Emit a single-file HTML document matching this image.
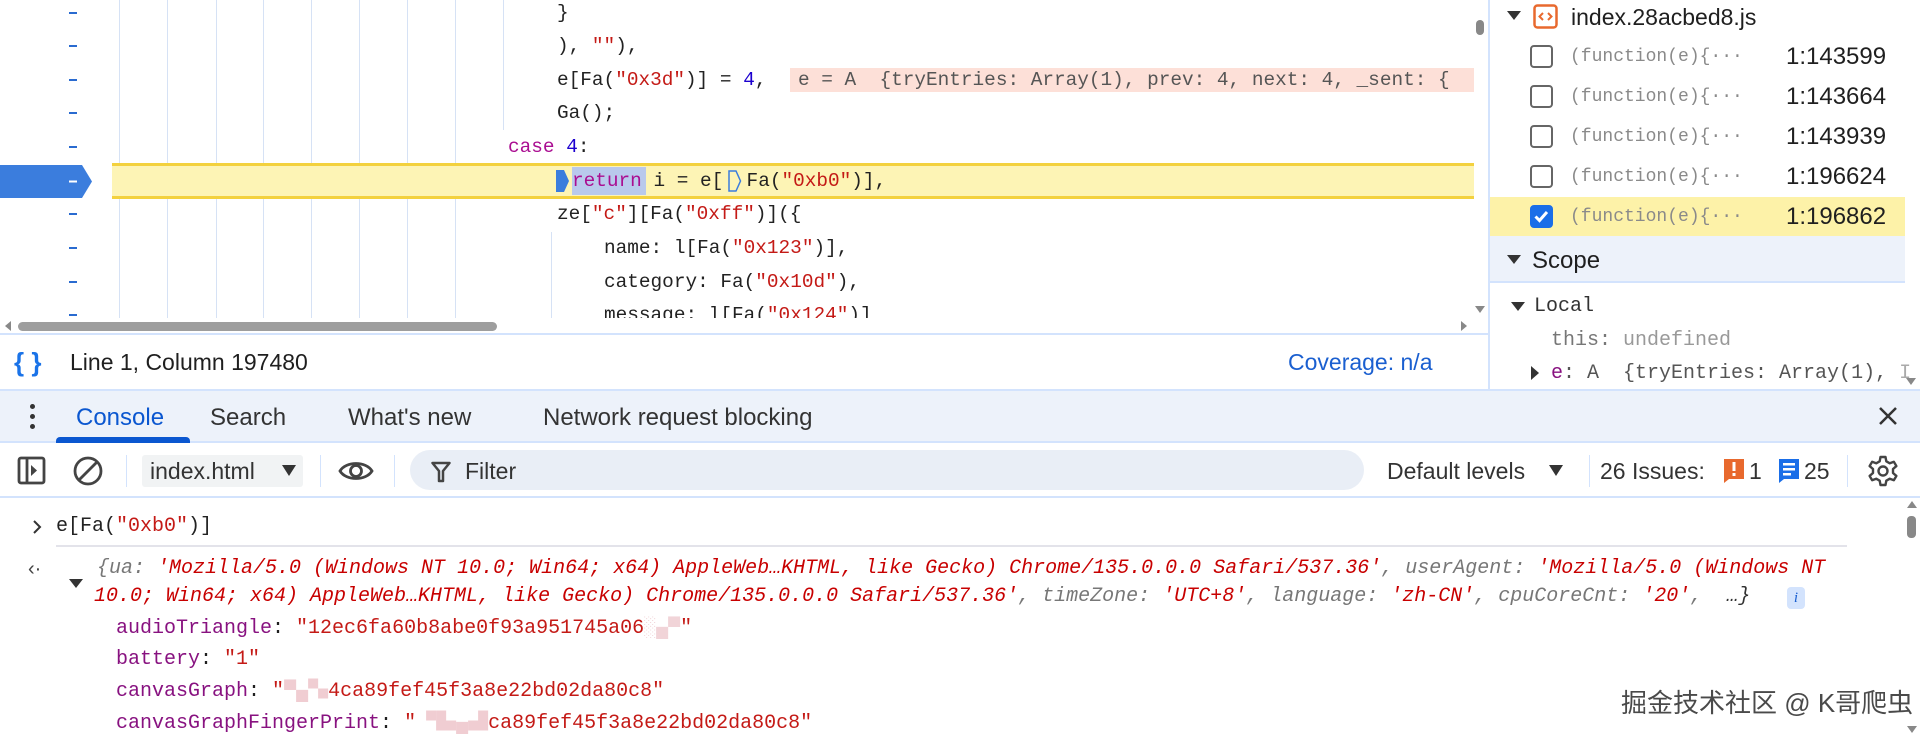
<!DOCTYPE html>
<html><head><meta charset="utf-8"><style>
*{margin:0;padding:0;box-sizing:border-box}
body{width:1920px;height:738px;overflow:hidden;background:#fff;position:relative;font-family:"Liberation Sans","Noto Sans CJK SC",sans-serif;color:#1f1f1f}
.a{position:absolute;white-space:pre}
.m{font-family:"Liberation Mono","Noto Sans CJK SC",monospace}
.code{font-size:19.4px;line-height:34px;color:#222}
.k{color:#aa0d91}.s{color:#c41a16}.n{color:#1c00cf}
.g{position:absolute;width:1px;background:#d6e2f5}
.dash{position:absolute;left:69px;width:8px;height:2px;background:#2a6bd0}
.cb{position:absolute;left:1530px;width:23px;height:23px;border:2px solid #666;border-radius:4px;background:#fff}
.fn{font-size:18px;color:#8a8a8a;left:1570px;line-height:30px}
.ln{font-size:24px;color:#1f1f1f;left:1786px;line-height:30px}
.sep{position:absolute;width:1px;background:#d3e3fd}
.ci{font-size:20px;line-height:28px;font-style:italic}
.gk{color:#777}.rs{color:#c80000}
.pk{color:#881280}.pv{color:#c41a16}
</style></head><body>

<!-- code area -->
<div class="g" style="left:119px;top:0;height:318px"></div>
<div class="g" style="left:167px;top:0;height:318px"></div>
<div class="g" style="left:216px;top:0;height:318px"></div>
<div class="g" style="left:263px;top:0;height:318px"></div>
<div class="g" style="left:311px;top:0;height:318px"></div>
<div class="g" style="left:359px;top:0;height:318px"></div>
<div class="g" style="left:407px;top:0;height:318px"></div>
<div class="g" style="left:455px;top:0;height:318px"></div>
<div class="g" style="left:503px;top:0;height:130px"></div>
<div class="g" style="left:551px;top:232px;height:86px"></div>

<div style="position:absolute;left:112px;top:163px;width:1362px;height:36px;background:#fdf4b5;border-top:3px solid #f3d13e;border-bottom:3px solid #f3d13e"></div>
<svg class="a" style="left:0;top:165px" width="94" height="33"><path d="M0 0H82L92 16.5L82 33H0Z" fill="#3b7ddd"/><rect x="69" y="15.5" width="8" height="2" fill="#fff"/></svg>

<div class="dash" style="top:12px"></div>
<div class="dash" style="top:45px"></div>
<div class="dash" style="top:79px"></div>
<div class="dash" style="top:112px"></div>
<div class="dash" style="top:146px"></div>
<div class="dash" style="top:213px"></div>
<div class="dash" style="top:247px"></div>
<div class="dash" style="top:281px"></div>
<div class="dash" style="top:314px"></div>

<div class="a m code" style="left:557px;top:-4px">}</div>
<div class="a m code" style="left:557px;top:29px">), <span class="s">""</span>),</div>
<div class="a m code" style="left:557px;top:63px">e[Fa(<span class="s">"0x3d"</span>)] = <span class="n">4</span>,</div>
<div style="position:absolute;left:790px;top:68px;width:684px;height:24px;background:#fde0d8"></div>
<div class="a m code" style="left:798px;top:63px;color:#555">e = A  {tryEntries: Array(1), prev: 4, next: 4, _sent: {</div>
<div class="a m code" style="left:557px;top:96px">Ga();</div>
<div class="a m code" style="left:508px;top:130px"><span class="k">case</span> <span class="n">4</span>:</div>
<svg class="a" style="left:556px;top:170px" width="14" height="22"><path d="M0 0H8L13 11L8 22H0Z" fill="#3b7ddd"/></svg>
<div style="position:absolute;left:572px;top:167px;width:74px;height:28px;background:#b9c9ec"></div>
<svg class="a" style="left:728px;top:170px" width="14" height="22"><path d="M1 1H8L12.5 11L8 21H1Z" fill="none" stroke="#3b7ddd" stroke-width="1.5"/></svg>
<div class="a m code" style="left:572px;top:164px"><span class="k">return</span> i = e[  Fa(<span class="s">"0xb0"</span>)],</div>
<div class="a m code" style="left:557px;top:197px">ze[<span class="s">"c"</span>][Fa(<span class="s">"0xff"</span>)]({</div>
<div class="a m code" style="left:604px;top:231px">name: l[Fa(<span class="s">"0x123"</span>)],</div>
<div class="a m code" style="left:604px;top:265px">category: Fa(<span class="s">"0x10d"</span>),</div>
<div style="position:absolute;left:0;top:318px;width:1478px;height:16px;background:#fff"></div>
<div style="position:absolute;left:600px;top:300px;width:700px;height:18px;overflow:hidden"><div class="a m code" style="left:4px;top:-2px">message: l[Fa(<span class="s">"0x124"</span>)]</div></div>
<div style="position:absolute;left:18px;top:322px;width:479px;height:9px;background:#9e9e9e;border-radius:5px"></div>
<svg class="a" style="left:4px;top:321px" width="8" height="10"><path d="M7 0V10L1 5Z" fill="#888"/></svg>
<svg class="a" style="left:1460px;top:321px" width="8" height="10"><path d="M1 0V10L7 5Z" fill="#888"/></svg>
<div style="position:absolute;left:1476px;top:20px;width:8px;height:15px;background:#888;border-radius:4px"></div>
<svg class="a" style="left:1475px;top:306px" width="10" height="8"><path d="M0 0H10L5 7Z" fill="#888"/></svg>
<div style="position:absolute;left:0;top:333px;width:1489px;height:2px;background:#d3e3fd"></div>

<!-- status bar -->
<div class="a" style="left:14px;top:346px;font-size:26px;line-height:32px;color:#1a73e8;font-weight:bold">{ }</div>
<div class="a" style="left:70px;top:348px;font-size:23px;line-height:28px">Line 1, Column 197480</div>
<div class="a" style="left:1288px;top:348px;font-size:23px;line-height:28px;color:#1a5fd0">Coverage: n/a</div>

<!-- right pane -->
<div style="position:absolute;left:1488px;top:0;width:2px;height:389px;background:#d3e3fd"></div>
<svg class="a" style="left:1507px;top:11px" width="14" height="10"><path d="M0 0H14L7 9Z" fill="#333"/></svg>
<svg class="a" style="left:1533px;top:4px" width="25" height="25"><rect x="1.5" y="1.5" width="22" height="22" rx="3" fill="none" stroke="#e8692e" stroke-width="2.5"/><path d="M10 9L6.5 12.5L10 16M15 9L18.5 12.5L15 16" fill="none" stroke="#e8692e" stroke-width="2"/></svg>
<div class="a" style="left:1571px;top:2px;font-size:23px;line-height:30px">index.28acbed8.js</div>

<div style="position:absolute;left:1490px;top:197px;width:415px;height:39px;background:#fdf2a8"></div>
<div class="cb" style="top:45px"></div>
<div class="cb" style="top:85px"></div>
<div class="cb" style="top:125px"></div>
<div class="cb" style="top:165px"></div>
<div class="cb" style="top:205px;background:#1a6ee8;border-color:#1a6ee8"><svg width="19" height="19" style="position:absolute;left:0;top:0"><path d="M3.5 9.5L7.5 13.5L15 5" fill="none" stroke="#fff" stroke-width="3"/></svg></div>
<div class="a m fn" style="top:42px">(function(e){···</div>
<div class="a m fn" style="top:82px">(function(e){···</div>
<div class="a m fn" style="top:122px">(function(e){···</div>
<div class="a m fn" style="top:162px">(function(e){···</div>
<div class="a m fn" style="top:202px">(function(e){···</div>
<div class="a ln" style="top:42px">1:143599</div>
<div class="a ln" style="top:82px">1:143664</div>
<div class="a ln" style="top:122px">1:143939</div>
<div class="a ln" style="top:162px">1:196624</div>
<div class="a ln" style="top:202px">1:196862</div>

<div style="position:absolute;left:1490px;top:236px;width:415px;height:47px;background:#edf2fa;border-bottom:2px solid #d3e3fd"></div>
<svg class="a" style="left:1507px;top:255px" width="14" height="10"><path d="M0 0H14L7 9Z" fill="#333"/></svg>
<div class="a" style="left:1532px;top:246px;font-size:24px;line-height:30px">Scope</div>
<svg class="a" style="left:1511px;top:302px" width="14" height="10"><path d="M0 0H14L7 9Z" fill="#333"/></svg>
<div class="a m" style="left:1534px;top:293px;font-size:20px;line-height:28px;color:#333">Local</div>
<div class="a m" style="left:1551px;top:327px;font-size:20px;line-height:28px;color:#999"><span style="color:#777">this:</span> undefined</div>
<svg class="a" style="left:1531px;top:366px" width="9" height="14"><path d="M0 0V14L8 7Z" fill="#333"/></svg>
<div class="a m" style="left:1551px;top:360px;font-size:20px;line-height:28px;color:#555"><span style="color:#881280">e</span>: A  {tryEntries: Array(1), <span style="color:#aaa">I</span></div>
<svg class="a" style="left:1906px;top:378px" width="10" height="8"><path d="M0 0H10L5 7Z" fill="#888"/></svg>

<!-- tab bar -->
<div style="position:absolute;left:0;top:389px;width:1920px;height:54px;background:#edf2fa;border-top:2px solid #d3e3fd;border-bottom:2px solid #d3e3fd"></div>
<div style="position:absolute;left:30px;top:404px;width:5px;height:5px;border-radius:50%;background:#333;box-shadow:0 10px 0 #333,0 20px 0 #333"></div>
<div class="a" style="left:76px;top:403px;font-size:24px;line-height:30px;color:#0b57d0">Console</div>
<div style="position:absolute;left:56px;top:437px;width:134px;height:6px;background:#0b57d0;border-radius:4px 4px 0 0"></div>
<div class="a" style="left:210px;top:403px;font-size:24px;line-height:30px;color:#333">Search</div>
<div class="a" style="left:348px;top:403px;font-size:24px;line-height:30px;color:#333">What's new</div>
<div class="a" style="left:543px;top:403px;font-size:24px;line-height:30px;color:#333">Network request blocking</div>
<svg class="a" style="left:1878px;top:406px" width="20" height="20"><path d="M2 2L18 18M18 2L2 18" stroke="#333" stroke-width="2.5"/></svg>

<!-- toolbar -->
<div style="position:absolute;left:0;top:496px;width:1920px;height:2px;background:#d3e3fd"></div>
<svg class="a" style="left:17px;top:456px" width="30" height="30"><rect x="2" y="2" width="25" height="25" rx="2" fill="none" stroke="#444" stroke-width="2.8"/><path d="M10 2V27" stroke="#444" stroke-width="2.8"/><path d="M14 9V20L20 14.5Z" fill="#444"/></svg>
<svg class="a" style="left:72px;top:455px" width="32" height="32"><circle cx="16" cy="16" r="13" fill="none" stroke="#444" stroke-width="2.8"/><path d="M7 25L25 7" stroke="#444" stroke-width="2.8"/></svg>
<div class="sep" style="left:126px;top:455px;height:32px"></div>
<div style="position:absolute;left:142px;top:455px;width:161px;height:32px;background:#f1f3f4;border-radius:3px"></div>
<div class="a" style="left:150px;top:456px;font-size:23px;line-height:30px;color:#333">index.html</div>
<svg class="a" style="left:282px;top:465px" width="14" height="12"><path d="M0 0H14L7 11Z" fill="#333"/></svg>
<div class="sep" style="left:320px;top:455px;height:32px"></div>
<svg class="a" style="left:338px;top:458px" width="36" height="26"><path d="M2 13C8 3 28 3 34 13C28 23 8 23 2 13Z" fill="none" stroke="#444" stroke-width="2.8"/><circle cx="18" cy="13" r="5.5" fill="none" stroke="#444" stroke-width="2.8"/></svg>
<div class="sep" style="left:394px;top:455px;height:32px"></div>
<div style="position:absolute;left:410px;top:450px;width:954px;height:40px;background:#e9eef6;border-radius:20px"></div>
<svg class="a" style="left:431px;top:461px" width="20" height="22"><path d="M1.5 2H18.5L12 10V20H8V10Z" fill="none" stroke="#444" stroke-width="2.5" stroke-linejoin="round"/></svg>
<div class="a" style="left:465px;top:456px;font-size:23px;line-height:30px;color:#333">Filter</div>
<div class="a" style="left:1387px;top:456px;font-size:23px;line-height:30px;color:#333">Default levels</div>
<svg class="a" style="left:1549px;top:465px" width="14" height="12"><path d="M0 0H14L7 11Z" fill="#333"/></svg>
<div class="sep" style="left:1589px;top:455px;height:32px"></div>
<div class="a" style="left:1600px;top:456px;font-size:23px;line-height:30px;color:#333">26 Issues:</div>
<svg class="a" style="left:1724px;top:459px" width="20" height="24"><path d="M0 0H20V20H5L0 24Z" fill="#e8692e"/><rect x="8.5" y="3" width="3" height="9" fill="#fff"/><rect x="8.5" y="14" width="3" height="3" fill="#fff"/></svg>
<div class="a" style="left:1749px;top:456px;font-size:23px;line-height:30px;color:#333">1</div>
<svg class="a" style="left:1779px;top:459px" width="20" height="24"><path d="M0 0H20V20H5L0 24Z" fill="#1a6ee8"/><rect x="4" y="4" width="12" height="2.5" fill="#fff"/><rect x="4" y="9" width="12" height="2.5" fill="#fff"/><rect x="4" y="14" width="8" height="2.5" fill="#fff"/></svg>
<div class="a" style="left:1804px;top:456px;font-size:23px;line-height:30px;color:#333">25</div>
<div class="sep" style="left:1847px;top:455px;height:32px"></div>
<svg class="a" style="left:1867px;top:455px" width="32" height="32" viewBox="0 0 32 32"><path d="M13.5 2H18.5L19.3 6.3L22.8 8.3L26.9 6.8L29.4 11.1L26 14V18L29.4 20.9L26.9 25.2L22.8 23.7L19.3 25.7L18.5 30H13.5L12.7 25.7L9.2 23.7L5.1 25.2L2.6 20.9L6 18V14L2.6 11.1L5.1 6.8L9.2 8.3L12.7 6.3Z" fill="none" stroke="#444" stroke-width="2.4" stroke-linejoin="round"/><circle cx="16" cy="16" r="4.5" fill="none" stroke="#444" stroke-width="2.4"/></svg>

<!-- console -->
<svg class="a" style="left:32px;top:519px" width="10" height="16"><path d="M2 2L8 8L2 14" fill="none" stroke="#333" stroke-width="2"/></svg>
<div class="a m" style="left:56px;top:513px;font-size:20px;line-height:28px;color:#222">e[Fa(<span class="s">"0xb0"</span>)]</div>
<div style="position:absolute;left:56px;top:545px;width:1791px;height:2px;background:#e3e3ea"></div>
<div class="a" style="left:28px;top:556px;font-size:20px;line-height:26px;color:#444">‹·</div>
<svg class="a" style="left:69px;top:579px" width="14" height="10"><path d="M0 0H14L7 9Z" fill="#333"/></svg>
<div class="a m ci gk" style="left:97px;top:555px">{ua: <span class="rs">'Mozilla/5.0 (Windows NT 10.0; Win64; x64) AppleWeb…KHTML, like Gecko) Chrome/135.0.0.0 Safari/537.36'</span>, userAgent: <span class="rs">'Mozilla/5.0 (Windows NT</span></div>
<div class="a m ci gk" style="left:94px;top:583px"><span class="rs">10.0; Win64; x64) AppleWeb…KHTML, like Gecko) Chrome/135.0.0.0 Safari/537.36'</span>, timeZone: <span class="rs">'UTC+8'</span>, language: <span class="rs">'zh-CN'</span>, cpuCoreCnt: <span class="rs">'20'</span>,  <span style="color:#333">…}</span></div>
<div style="position:absolute;left:1787px;top:587px;width:18px;height:22px;background:#d3e3fd;border-radius:4px;color:#1a5fd0;font:italic 15px 'Liberation Serif',serif;text-align:center;line-height:22px">i</div>
<div class="a m" style="left:116px;top:615px;font-size:20px;line-height:28px"><span class="pk">audioTriangle</span>: <span class="pv">"12ec6fa60b8abe0f93a951745a06<span style="color:#f1d4d8">░▄▀</span>"</span></div>
<div class="a m" style="left:116px;top:646px;font-size:20px;line-height:28px"><span class="pk">battery</span>: <span class="pv">"1"</span></div>
<div class="a m" style="left:116px;top:678px;font-size:20px;line-height:28px"><span class="pk">canvasGraph</span>: <span class="pv">"<span style="color:#f0cdd2">▀▄▚</span>4ca89fef45f3a8e22bd02da80c8"</span></div>
<div class="a m" style="left:116px;top:710px;font-size:20px;line-height:28px"><span class="pk">canvasGraphFingerPrint</span>: <span class="pv">"<span style="color:#f0cdd2">▝▙▄▟</span>ca89fef45f3a8e22bd02da80c8"</span></div>
<svg class="a" style="left:1907px;top:500px" width="10" height="8"><path d="M0 8H10L5 1Z" fill="#888"/></svg>
<div style="position:absolute;left:1907px;top:516px;width:9px;height:22px;background:#888;border-radius:4px"></div>
<svg class="a" style="left:1907px;top:726px" width="10" height="8"><path d="M0 0H10L5 7Z" fill="#888"/></svg>
<div class="a" style="left:1621px;top:686px;font-size:26px;line-height:34px;color:#4a4a4a;text-shadow:0 0 3px #fff">掘金技术社区 @ K哥爬虫</div>
</body></html>
